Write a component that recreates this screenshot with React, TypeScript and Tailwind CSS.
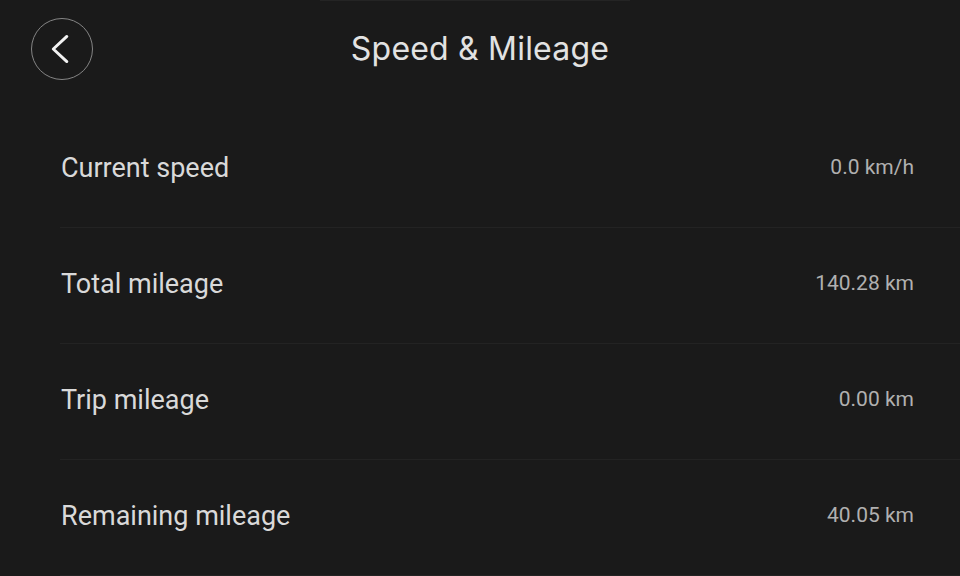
const rows = [
  { label: "Current speed", value: "0.0 km/h" },
  { label: "Total mileage", value: "140.28 km" },
  { label: "Trip mileage", value: "0.00 km" },
  { label: "Remaining mileage", value: "40.05 km" },
];

function BackButton() {
  return (
    <button
      type="button"
      aria-label="Back"
      className="w-[62px] h-[62px] rounded-full border-[1.5px] border-[#858585] flex items-center justify-center shrink-0"
    >
      <svg width="62" height="62" viewBox="0 0 62 62" fill="none">
        <path
          d="M36 18 L22 31 L36 44"
          stroke="#f2f2f2"
          strokeWidth="3"
          strokeLinecap="round"
          strokeLinejoin="round"
        />
      </svg>
    </button>
  );
}

export default function App() {
  return (
    <div className="w-[960px] h-[576px] overflow-hidden bg-[#1a1a1a] font-['Roboto',sans-serif]">
      <div className="w-[310px] h-px ml-[320px] bg-[#242424]" />
      <header className="h-[111px] relative flex items-start pt-[17px] pl-[31px]">
        <BackButton />
        <h1 className="absolute left-0 right-0 top-[28px] text-center text-[32px] leading-[40px] text-[#e2e2e2] font-['Inter',sans-serif] tracking-[0.2px]">
          Speed &amp; Mileage
        </h1>
      </header>
      <div className="ml-[60px]">
        {rows.map((row) => (
          <div
            key={row.label}
            className="h-[116px] flex items-center justify-between pr-[46px] pb-[3px] border-b border-[#232323]"
          >
            <span className="text-[27px] text-[#d9d9d9] pl-px">{row.label}</span>
            <span className="text-[21px] text-[#b0b0b0]">{row.value}</span>
          </div>
        ))}
      </div>
    </div>
  );
}
